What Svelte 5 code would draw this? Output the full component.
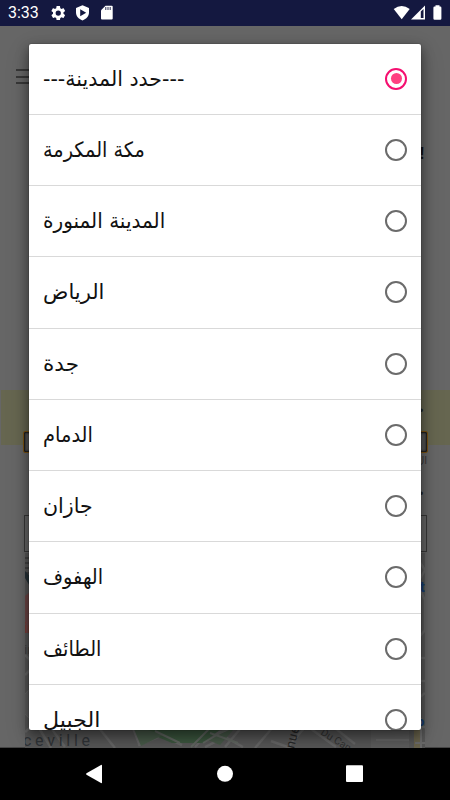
<script>
  let cities = [
    { name: '---حدد المدينة---', width: 141 },
    { name: 'مكة المكرمة', width: 102 },
    { name: 'المدينة المنورة', width: 122 },
    { name: 'الرياض', width: 61 },
    { name: 'جدة', width: 36 },
    { name: 'الدمام', width: 50 },
    { name: 'جازان', width: 50 },
    { name: 'الهفوف', width: 60 },
    { name: 'الطائف', width: 58 },
    { name: 'الجبيل', width: 57 }
  ];
  let selected = 0;

  // keeps a label at its own width, whatever Arabic font is there
  function fit(node, width) {
    node.style.transform = `scaleX(${width / node.offsetWidth})`;
  }
</script>

<div class="screen">
  <header class="status">
    <span class="time">3:33</span>
    <svg class="left-icons" width="64" height="18" viewBox="0 0 64 18">
      <g fill="#fff">
        <path transform="translate(-.5 .3) scale(.73)" d="M19.14 12.94c.04-.3.06-.61.06-.94s-.02-.64-.07-.94l2.03-1.58a.49.49 0 0 0 .12-.61l-1.92-3.32a.49.49 0 0 0-.59-.22l-2.39.96c-.5-.38-1.03-.7-1.62-.94L14.4 2.81a.48.48 0 0 0-.48-.41h-3.84a.47.47 0 0 0-.47.41l-.36 2.54c-.59.24-1.13.57-1.62.94l-2.39-.96a.48.48 0 0 0-.59.22L2.74 8.87a.47.47 0 0 0 .12.61l2.03 1.58c-.05.3-.09.63-.09.94s.02.64.07.94l-2.03 1.58a.49.49 0 0 0-.12.61l1.92 3.32c.12.22.37.29.59.22l2.39-.96c.5.38 1.03.7 1.62.94l.36 2.54c.05.24.24.41.48.41h3.84c.24 0 .44-.17.47-.41l.36-2.54c.59-.24 1.13-.56 1.62-.94l2.39.96c.22.08.47 0 .59-.22l1.92-3.32a.47.47 0 0 0-.12-.61zM12 15.6a3.6 3.6 0 1 1 0-7.2 3.6 3.6 0 0 1 0 7.2z" />
        <path fill-rule="evenodd" d="M32.500 1.200 39 4v4.500c0 3.700-2.500 6.500-6.500 7.900C28.500 15 26 12.200 26 8.500V4zM30.200 5.200v7L36.200 8.700z" />
        <path d="M55.500 1.700h6.200q1 0 1 1v11.800q0 1-1 1H52q-1 0-1-1V6.200z" />
      </g>
      <path d="M55.800 3v3M58 3v3M60.200 3v3" stroke="#141840" stroke-width=".9" />
    </svg>
    <svg class="right-icons" width="50" height="18" viewBox="0 0 50 18">
      <path d="M.7 5Q8.700-1.200 16.700 5L8.700 15.200z" fill="#fff" />
      <path d="M18 15.500 32 1.500v14z" fill="#fff" />
      <path d="M27.800 7.500 30.500 5v9h-2.700z" fill="#141840" />
      <path d="M42.500 1.300h4v1.300h.7q1.200 0 1.200 1.200v10.700q0 1.200-1.200 1.200h-5.600q-1.200 0-1.200-1.200V3.800q0-1.200 1.200-1.200h.9z" fill="#fff" />
    </svg>
  </header>

  <main class="page">
    <div class="toolbar">
      <span class="menu"><i></i><i></i><i></i></span>
    </div>
    <div class="heading">!</div>
    <div class="banner"><span>•</span></div>
    <div class="spinner"></div>
    <div class="caption">ال</div>
    <div class="dot">•</div>
    <div class="input"></div>
    <svg class="map" width="400" height="195" viewBox="0 0 400 195">
      <rect width="400" height="195" fill="#575757" />
      <path d="M0 5h5M0 10h5M0 15h5M0 20h5" stroke="#424242" stroke-width="2" />
      <path d="M0 18l6 6v11l-6-10z" fill="#263238" />
      <path d="M0 43l6-5v42H0z" fill="#6c4545" />
      <g stroke="#666" stroke-width="2.500" fill="none">
        <path d="M0 102l10 10-10 10M8 165l18 30M0 179l18-15 22 30M70 170l20 25M106 170l9 23M113 192l25-10 22-12M135 182l22 10M170 194l22-24M180 194l20-10 18 10M184 182l32-8M200 194l20-24" />
        <path d="M230 195l30-35M246 188l22 8M262 195l20-23M275 168l36 26M310 175l20 16M392 5l8 12-8 14 8 16v30l-8 10M390 105h10M390 128h10M390 148l10-8M390 174h10" />
      </g>
      <path d="M108 176h88l-18 14h-31l-19-8z" fill="#3c573f" />
      <path d="M109 176l11 0 18 6-22 11zM183 187l21-10 5-1-14 16z" fill="#485a49" />
      <path d="M166 194l20-20M178 190l24-14M185 180l28 10M130 178l25 12" stroke="#626862" stroke-width="2" fill="none" />
      <path d="M346 172h38v23h-38z" fill="#5d5d5d" />
      <path d="M351 187h33" stroke="#707070" stroke-width="1" />
      <path d="M389 175h6v20h-6z" fill="#69634c" />
      <path d="M396 165v30M390 190h10" stroke="#6b6b6b" stroke-width="2" />
      <circle cx="13" cy="151" r="16.500" fill="#606060" stroke="#686868" />
      <g font-family="Roboto, sans-serif">
        <text x="-1" y="80" font-size="14" fill="#7c3c35">in</text>
        <text x="-1" y="101" font-size="13" fill="#414141">in</text>
        <text x="-2" y="193" font-size="16" textLength="67" fill="#303438">ceville</text>
        <text transform="translate(269 196) rotate(-76)" font-size="13" letter-spacing=".4" fill="#262626">nue</text>
        <text transform="translate(295 181) rotate(32)" font-size="10.500" fill="#333">Du Cana</text>
        <text x="395" y="39" font-size="14" font-weight="700" fill="#153d75">t</text>
        <text x="392" y="173" font-size="13" font-weight="700" fill="#153d75">o</text>
      </g>
    </svg>
  </main>

  <div class="dialog">
    {#each cities as city, i}
      <label class="row">
        <span class="name" dir="rtl" use:fit={city.width}>{city.name}</span>
        <input type="radio" name="city" value={i} bind:group={selected} />
      </label>
    {/each}
  </div>

  <nav class="nav">
    <svg width="450" height="52" viewBox="0 0 450 52">
      <g fill="#fff">
        <path d="M86.500 25.200 101 17q1-.5 1 .6v16.800q0 1.100-1 .6L86.500 26.700q-1-.7 0-1.500z" />
        <circle cx="225" cy="25.800" r="8" />
        <rect x="346" y="17.200" width="17" height="16.800" rx="1" />
      </g>
    </svg>
  </nav>
</div>

<style>
  :global(body) {
    margin: 0;
    overflow: hidden;
  }

  .screen {
    position: relative;
    display: flex;
    flex-direction: column;
    width: 450px;
    height: 800px;
    background: #666;
    font-family: Roboto, sans-serif;
    overflow: hidden;
  }

  .status {
    display: flex;
    align-items: center;
    height: 26px;
    background: #141840;
    color: #fff;
  }

  .time {
    width: 42px;
    padding-left: 8px;
    font-size: 16px;
    line-height: 28px;
  }

  .right-icons {
    margin-left: auto;
    margin-right: 7px;
  }

  .page {
    display: flex;
    flex-direction: column;
    height: 722px;
    box-shadow: inset 0 -1px #444;
  }

  .toolbar {
    height: 43px;
    padding-left: 16px;
  }

  .menu {
    display: flex;
    flex-direction: column;
    gap: 4.500px;
    width: 20px;
    padding-top: 43px;
  }

  .menu i {
    height: 2px;
    background: #383838;
  }

  .heading {
    height: 241px;
    margin-top: 75px;
    padding-right: 26px;
    text-align: right;
    color: #111;
    font-size: 16px;
    font-weight: 700;
    line-height: 20px;
  }

  .banner {
    height: 55px;
    margin: 5px 0 0 1px;
    padding-right: 26px;
    background: #666650;
    text-align: right;
    color: #222;
    line-height: 42px;
  }

  .spinner {
    flex: none;
    height: 20px;
    margin: -14px 22px 0 23px;
    border: 1px solid #7a5212;
    border-radius: 2px;
    background: #555;
    box-shadow: inset 0 0 2px 1px #111;
  }

  .caption {
    height: 20px;
    padding: 0 23px 0 0;
    text-align: right;
    color: #353535;
    font-family: "DejaVu Sans", sans-serif;
    font-size: 10px;
    line-height: 15px;
  }

  .dot {
    height: 42px;
    padding-right: 26px;
    text-align: right;
    color: #222;
    line-height: 42px;
  }

  .input {
    flex: none;
    height: 35px;
    margin: 0 23px 0 24px;
    border: 1px solid #383838;
  }

  .map {
    display: block;
    flex: none;
    margin: 1px 0 0 25px;
  }

  .dialog {
    position: absolute;
    top: 43.500px;
    left: 29px;
    width: 392px;
    height: 686.500px;
    border-radius: 2px;
    background: #fff;
    box-shadow: 0 5px 12px 1px rgba(0, 0, 0, .4), 0 8px 24px rgba(0, 0, 0, .18), 0 0 1px #111;
    overflow: hidden;
  }

  .row {
    display: flex;
    align-items: center;
    justify-content: space-between;
    box-sizing: border-box;
    height: 71.250px;
    padding: 0 14px;
    border-bottom: 1px solid #d9d9d9;
  }

  .name {
    color: #111;
    font-family: "DejaVu Sans", sans-serif;
    font-size: 21px;
    line-height: 30px;
    white-space: nowrap;
    transform-origin: left center;
  }

  input {
    display: grid;
    place-items: center;
    appearance: none;
    box-sizing: border-box;
    width: 22px;
    height: 22px;
    margin: 0;
    border: 2px solid #6b6b6b;
    border-radius: 50%;
  }

  input:checked {
    border-color: #f50f70;
  }

  input:checked::before {
    content: '';
    width: 11px;
    height: 11px;
    border-radius: 50%;
    background: #ff4081;
  }

  .nav {
    z-index: 1;
    height: 52px;
    background: #000;
  }

  .nav svg {
    display: block;
  }
</style>
